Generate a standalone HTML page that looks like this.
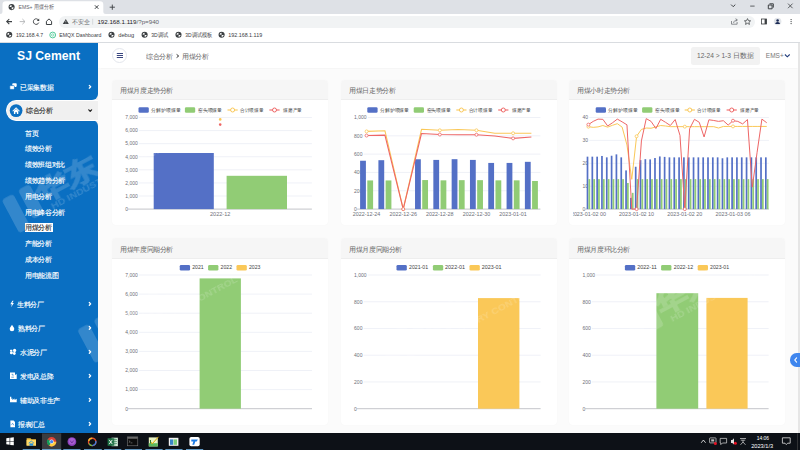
<!DOCTYPE html>
<html><head><meta charset="utf-8">
<style>
*{margin:0;padding:0;box-sizing:border-box}
html,body{width:800px;height:450px;overflow:hidden;background:#fbfbfb;font-family:"Liberation Sans",sans-serif;position:relative}
.a{position:absolute}
.t{position:absolute;white-space:nowrap;line-height:1}
#tabbar{left:0;top:0;width:800px;height:14px;background:#dee1e6}
#tab{left:2px;top:1px;width:102px;height:13px;background:#fff;border-radius:4px 4px 0 0}
#toolbar{left:0;top:14px;width:800px;height:14px;background:#fff}
#omni{left:58.5px;top:16px;width:696px;height:11.5px;background:#f1f3f4;border-radius:6px}
#bookmarks{left:0;top:28px;width:800px;height:14.5px;background:#fff;border-bottom:0.5px solid #d9dce0}
#sidebar{left:0;top:42.5px;width:98px;height:391px;background:#0a6fc2}
#header{left:98px;top:42.5px;width:699.7px;height:25.5px;background:#fff;box-shadow:0 0.5px 1px rgba(0,0,0,0.02)}
.card{position:absolute;background:#fff;border-radius:4px;box-shadow:0 0 1.5px rgba(0,0,0,0.035);overflow:hidden}
.card .hd{position:absolute;left:0;top:0;right:0;height:20.3px;background:#f6f6f6;border-bottom:0.5px solid #eeeeee}
.card .tt{position:absolute;left:8.3px;top:7.3px;font-size:20px;transform:scale(0.3315);transform-origin:0 0;color:#666;white-space:nowrap;line-height:1}
#taskbar{left:0;top:433.4px;width:800px;height:16.6px;background:#0d1117}
.sm{color:#fff;font-size:20px;transform:scale(0.3335);transform-origin:0 0;-webkit-text-stroke:0.45px currentColor}
.z{font-size:20px;transform-origin:0 0}
</style></head><body>

<!-- browser chrome -->
<div class="a" id="tabbar"></div>
<svg class="a" style="left:0;top:0" width="120" height="15" viewBox="0 0 120 15"><path d="M0,14 Q2.5,14 2.5,11.5 V4.5 Q2.5,1.2 5.8,1.2 H100 Q103.3,1.2 103.3,4.5 V11.5 Q103.3,14 105.8,14 V15 H0Z" fill="#fff"/></svg>
<div class="a" id="toolbar"></div>
<div class="a" id="omni"></div>
<div class="a" id="bookmarks"></div>
<svg class="a" style="left:0;top:0" width="800" height="43" viewBox="0 0 800 43">
<defs>
<g id="globe"><circle r="3.05" fill="#3c4043"/><path d="M-2.1,-0.2 C-1.9,-1.3 -1.1,-2 0,-2.1 L-0.1,-0.1Z" fill="#fff"/><path d="M2.1,0.3 C1.9,1.4 1.1,2 0.1,2.1 L0.1,0.2Z" fill="#fff"/></g>
</defs>
<!-- tab -->
<use href="#globe" x="11.6" y="7.1"/>
<text x="18.5" y="9.2" font-size="6.1" fill="#5f6368" font-family="Liberation Sans" textLength="35.5" lengthAdjust="spacingAndGlyphs">EMS+ 用煤分析</text>
<path d="M94.9,5.3 L98.4,8.8 M98.4,5.3 L94.9,8.8" stroke="#3c4043" stroke-width="1"/>
<path d="M112.3,4.6 V9.8 M109.7,7.2 H114.9" stroke="#3c4043" stroke-width="0.9"/>
<!-- window controls -->
<path d="M731.1,4.6 L733.2,6.7 L735.3,4.6" stroke="#3c4043" stroke-width="1" fill="none"/>
<path d="M750.2,6.1 H754.6" stroke="#3c4043" stroke-width="0.8"/>
<path d="M768.3,5 h3.8 v3.8 h-3.8z M769.5,3.8 h3.8 v3.8" stroke="#3c4043" stroke-width="1" fill="none"/>
<path d="M788,3.6 L792.6,8.2 M792.6,3.6 L788,8.2" stroke="#3c4043" stroke-width="0.8"/>
<!-- nav -->
<path d="M12,21.6 H6.8 M9.3,19 L6.7,21.6 L9.3,24.2" stroke="#3c4043" stroke-width="1.05" fill="none"/>
<path d="M19.7,21.6 H24.9 M22.4,19 L25,21.6 L22.4,24.2" stroke="#b1b3b6" stroke-width="0.9" fill="none"/>
<path d="M38.6,20.2 A2.8,2.8 0 1 0 38.8,22.6" stroke="#3c4043" stroke-width="0.9" fill="none"/><path d="M39.2,18.6 V21 H36.8Z" fill="#3c4043"/>
<path d="M46.4,21.3 L49,18.9 L51.6,21.3 V24.5 H46.4Z" stroke="#3c4043" stroke-width="1" fill="none" stroke-linejoin="round"/>
<!-- omnibox -->
<path d="M65.8,19 L68.8,24 H62.8Z" fill="#3c4043"/><path d="M65.8,20.7 V22.3 M65.8,22.9 V23.4" stroke="#fff" stroke-width="0.5"/>
<text x="72.4" y="24" font-size="5.9" fill="#5f6368" font-family="Liberation Sans">不安全</text>
<rect x="92.5" y="18.8" width="0.6" height="5.8" fill="#c4c7c9"/>
<text x="97.4" y="24.1" font-size="6.2" fill="#202124" font-family="Liberation Sans">192.168.1.119<tspan fill="#5f6368">/?p=940</tspan></text>
<path d="M731.5,21 v3.2 h5.6 v-2.2 M733.6,23 c0.3,-2 1.5,-3 3.5,-3 M735.6,18.6 l1.8,1.4 l-1.8,1.4" stroke="#5f6368" stroke-width="0.7" fill="none"/>
<path d="M747.5,18.6 l0.95,2.05 2.15,0.2 -1.65,1.45 0.5,2.1 -1.95,-1.1 -1.95,1.1 0.5,-2.1 -1.65,-1.45 2.15,-0.2z" stroke="#3c4043" stroke-width="0.75" fill="none" stroke-linejoin="round"/>
<rect x="761.6" y="19" width="5" height="5" stroke="#3c4043" stroke-width="0.8" fill="none"/><rect x="764.6" y="19" width="2" height="5" fill="#3c4043"/>
<circle cx="777.6" cy="21.6" r="3.8" fill="#e3e6ea"/><circle cx="777.6" cy="20.4" r="1.25" fill="#1b2a55"/><path d="M775.1,23.9 q0.4,-1.9 2.5,-1.9 q2.1,0 2.5,1.9z" fill="#1b2a55"/>
<circle cx="791.1" cy="19.6" r="0.65" fill="#3c4043"/><circle cx="791.1" cy="21.6" r="0.65" fill="#3c4043"/><circle cx="791.1" cy="23.6" r="0.65" fill="#3c4043"/>
<!-- bookmarks -->
<use href="#globe" x="9.2" y="34.8"/>
<text x="16" y="37.1" font-size="5.8" fill="#3c4043" font-family="Liberation Sans" textLength="27" lengthAdjust="spacingAndGlyphs">192.168.4.7</text>
<circle cx="52.7" cy="35" r="2.9" fill="none" stroke="#3ec48f" stroke-width="0.9"/><circle cx="52.7" cy="35" r="1.2" fill="none" stroke="#3ec48f" stroke-width="0.6"/>
<text x="59.3" y="37.1" font-size="5.8" fill="#3c4043" font-family="Liberation Sans" textLength="42.1" lengthAdjust="spacingAndGlyphs">EMQX Dashboard</text>
<use href="#globe" x="111.5" y="34.8"/>
<text x="118.2" y="37.1" font-size="5.8" fill="#3c4043" font-family="Liberation Sans" textLength="16" lengthAdjust="spacingAndGlyphs">debug</text>
<use href="#globe" x="144.6" y="34.8"/>
<text x="151.2" y="37.1" font-size="5.8" fill="#3c4043" font-family="Liberation Sans" textLength="17" lengthAdjust="spacingAndGlyphs">3D调试</text>
<use href="#globe" x="178.5" y="34.8"/>
<text x="185.2" y="37.1" font-size="5.8" fill="#3c4043" font-family="Liberation Sans" textLength="27" lengthAdjust="spacingAndGlyphs">3D调试模板</text>
<use href="#globe" x="221.6" y="34.8"/>
<text x="228.2" y="37.1" font-size="5.8" fill="#3c4043" font-family="Liberation Sans" textLength="34" lengthAdjust="spacingAndGlyphs">192.168.1.119</text>
</svg>


<!-- sidebar -->
<div class="a" id="sidebar"></div>
<svg class="a" style="left:0;top:43px" width="98" height="30" viewBox="0 43 98 30"><text x="17" y="60" font-family="Liberation Sans" font-size="12.6" font-weight="bold" fill="#fff" textLength="63" lengthAdjust="spacingAndGlyphs">SJ Cement</text></svg>

<!-- pill notch -->
<div class="a" style="left:88px;top:94px;width:10px;height:32px;background:#f0f0f0"></div>
<div class="a" style="left:80px;top:88px;width:18px;height:12px;background:#0a6fc2;border-bottom-right-radius:6px"></div>
<div class="a" style="left:80px;top:120.4px;width:18px;height:12px;background:#0a6fc2;border-top-right-radius:6px"></div>
<div class="a" style="left:5.5px;top:99.8px;width:92.5px;height:20.8px;background:#f0f0f0;border-radius:10.4px 0 0 10.4px;border:1.8px solid #fff;border-right:none"></div>
<svg class="a" style="left:0;top:43px" width="98" height="390" viewBox="0 43 98 390">
<g fill="#fff">
<!-- copy icon -->
<rect x="12.3" y="83.3" width="4.4" height="3.6" rx="0.8"/>
<rect x="9.8" y="85.6" width="4.6" height="3.8" rx="0.8" stroke="#0a6fc2" stroke-width="0.7"/>
</g>
<!-- home -->
<circle cx="16.1" cy="110.6" r="6.4" fill="#0a6fc2"/>
<path d="M12.3,111 L16.1,107.2 L19.9,111 L19.2,111.6 L16.1,108.6 L13,111.6Z M13.9,111 L16.1,108.9 L18.3,111 V114 H16.9 V112.3 H15.3 V114 H13.9Z" fill="#fff"/>
<path d="M88.8,109.8 L90.2,111.3 L91.6,109.8" stroke="#222" stroke-width="1.2" fill="none" stroke-linecap="round" stroke-linejoin="round"/>
<!-- arrows -->
<g stroke="#fff" stroke-width="1.25" fill="none" stroke-linecap="round" stroke-linejoin="round">
<path d="M89.3,85.4 L90.7,86.8 L89.3,88.2"/>
<path d="M89.3,302.5 L90.7,303.9 L89.3,305.3"/>
<path d="M89.3,326.5 L90.7,327.9 L89.3,329.3"/>
<path d="M89.3,350.5 L90.7,351.9 L89.3,353.3"/>
<path d="M89.3,374.5 L90.7,375.9 L89.3,377.3"/>
<path d="M89.3,398.5 L90.7,399.9 L89.3,401.3"/>
<path d="M89.3,422.5 L90.7,423.9 L89.3,425.3"/>
</g>
<g fill="#fff">
<!-- lightning -->
<path d="M12.4,300.7 L10.3,304.3 H11.9 L11.1,307.3 L13.9,303.1 H12.3 L13.6,300.7Z"/>
<!-- drop -->
<path d="M12,324.8 C11,326.4 9.7,327.6 9.7,329 A2.3,2.3 0 0 0 14.3,329 C14.3,327.6 13,326.4 12,324.8Z"/>
<!-- cement -->
<circle cx="14.6" cy="350.4" r="1.6"/><circle cx="11.4" cy="352.8" r="1.5"/><circle cx="14.3" cy="353.5" r="1.4"/><rect x="10" y="349.8" width="2.4" height="1.6" rx="0.4"/>
<!-- power station -->
<path d="M10,372.5 H15 V379 H10Z M15,375 L16.7,374 V379 H15Z"/>
<!-- factory -->
<path d="M10,396.8 V402.3 H16.7 V398.8 L14.6,400 V398.6 L12.4,400 V398.3 L11.3,399 V396.8Z"/>
<!-- report -->
<path d="M10.4,420.5 H13.6 L15,421.9 V427.2 H10.4Z"/>
</g>
<path d="M11.6,374.3 l1.4,0 0,1.6 M11.3,377.2 l2.6,0" stroke="#0a6fc2" stroke-width="0.6" fill="none"/>
<path d="M11.5,424.7 L12.6,423.3 L13.9,425.3" stroke="#0a6fc2" stroke-width="0.6" fill="none"/>
</svg>
<div class="t sm" style="left:20px;top:83.5px">已采集数据</div>
<div class="t sm" style="left:25.6px;top:106.5px;color:#333">综合分析</div>
<div class="a" style="left:24.9px;top:222.8px;width:28.6px;height:9.5px;background:#fff"></div>
<div class="t sm" style="left:25px;top:129.5px">首页</div>
<div class="t sm" style="left:25px;top:145.2px">绩效分析</div>
<div class="t sm" style="left:25px;top:161.2px">绩效班组对比</div>
<div class="t sm" style="left:25px;top:176.9px">绩效趋势分析</div>
<div class="t sm" style="left:25px;top:192.8px">用电分析</div>
<div class="t sm" style="left:25px;top:208.5px">用电峰谷分析</div>
<div class="t sm" style="left:25px;top:224.4px;color:#333">用煤分析</div>
<div class="t sm" style="left:25px;top:240.2px">产能分析</div>
<div class="t sm" style="left:25px;top:256.2px">成本分析</div>
<div class="t sm" style="left:25px;top:271.9px">用电能流图</div>
<div class="t sm" style="left:17.4px;top:300.6px">生料分厂</div>
<div class="t sm" style="left:17.8px;top:324.6px">熟料分厂</div>
<div class="t sm" style="left:20px;top:348.6px">水泥分厂</div>
<div class="t sm" style="left:20px;top:372.6px">发电及总降</div>
<div class="t sm" style="left:20px;top:396.6px">辅助及非生产</div>
<div class="t sm" style="left:18.4px;top:420.6px">报表汇总</div>


<!-- main header -->
<div class="a" id="header"></div>
<div class="a" style="left:112.2px;top:47.9px;width:15.3px;height:15.3px;border-radius:50%;background:#fff;border:0.6px solid #e3e6ec"></div>
<svg class="a" style="left:0;top:0" width="800" height="70" viewBox="0 0 800 70">
<path d="M116.8,53.5 H123 M116.8,55.5 H123 M116.8,57.5 H123" stroke="#2e3c78" stroke-width="0.95"/>
<path d="M176.6,54.4 L178.7,56 L176.6,57.6" stroke="#333" stroke-width="1" fill="none"/>
<path d="M784.9,54.5 L787.3,56.8 L789.7,54.5" stroke="#1f3a7a" stroke-width="1.1" fill="none"/>
</svg>
<div class="t z" style="left:146px;top:52.6px;color:#666;transform:scale(0.3335)">综合分析</div>
<div class="t z" style="left:182px;top:52.6px;color:#666;transform:scale(0.3335)">用煤分析</div>
<div class="a" style="left:691.2px;top:47.3px;width:68.7px;height:17.4px;background:#f2f2f2;border-radius:2.5px"></div>
<div class="t" style="left:697px;top:53px;font-size:6.6px;color:#666">12-24 &gt; 1-3 日数据</div>
<div class="t" style="left:765.8px;top:52.6px;font-size:6.5px;color:#777">EMS+</div>
<div class="a" style="left:797.7px;top:42.5px;width:2.3px;height:390.9px;background:#e6e6e6"></div>


<!-- cards -->
<div class="card" style="left:112px;top:80px;width:216px;height:145.3px"><div class="hd"></div><div class="tt">用煤月度走势分析</div></div>
<div class="card" style="left:340.8px;top:80px;width:216px;height:145.3px"><div class="hd"></div><div class="tt">用煤日走势分析</div></div>
<div class="card" style="left:569.2px;top:80px;width:216.3px;height:145.3px"><div class="hd"></div><div class="tt">用煤小时走势分析</div></div>
<div class="card" style="left:112px;top:238.4px;width:216px;height:187px"><div class="hd" style="height:20.2px"></div><div class="tt" style="top:7.2px">用煤年度同期分析</div></div>
<div class="card" style="left:340.8px;top:238.4px;width:216px;height:187px"><div class="hd" style="height:20.2px"></div><div class="tt" style="top:7.2px">用煤月度同期分析</div></div>
<div class="card" style="left:569.2px;top:238.4px;width:216.3px;height:187px"><div class="hd" style="height:20.2px"></div><div class="tt" style="top:7.2px">用煤月度环比分析</div></div>

<!--CHARTS--><svg class="a" style="left:0;top:0" width="800" height="450" viewBox="0 0 800 450" font-family="Liberation Sans">
<defs><clipPath id="c3"><rect x="572.9" y="100" width="214" height="125"/></clipPath></defs>
<text x="125.30" y="119.30" font-size="5" fill="#6e7079" text-anchor="start">7,000</text>
<line x1="139.01" y1="117.50" x2="311.90" y2="117.50" stroke="#e4e8f1" stroke-width="0.6"/>
<text x="125.30" y="132.39" font-size="5" fill="#6e7079" text-anchor="start">6,000</text>
<line x1="139.01" y1="130.59" x2="311.90" y2="130.59" stroke="#e4e8f1" stroke-width="0.6"/>
<text x="125.30" y="145.47" font-size="5" fill="#6e7079" text-anchor="start">5,000</text>
<line x1="139.01" y1="143.67" x2="311.90" y2="143.67" stroke="#e4e8f1" stroke-width="0.6"/>
<text x="125.30" y="158.56" font-size="5" fill="#6e7079" text-anchor="start">4,000</text>
<line x1="139.01" y1="156.76" x2="311.90" y2="156.76" stroke="#e4e8f1" stroke-width="0.6"/>
<text x="125.30" y="171.64" font-size="5" fill="#6e7079" text-anchor="start">3,000</text>
<line x1="139.01" y1="169.84" x2="311.90" y2="169.84" stroke="#e4e8f1" stroke-width="0.6"/>
<text x="125.30" y="184.73" font-size="5" fill="#6e7079" text-anchor="start">2,000</text>
<line x1="139.01" y1="182.93" x2="311.90" y2="182.93" stroke="#e4e8f1" stroke-width="0.6"/>
<text x="125.30" y="197.81" font-size="5" fill="#6e7079" text-anchor="start">1,000</text>
<line x1="139.01" y1="196.01" x2="311.90" y2="196.01" stroke="#e4e8f1" stroke-width="0.6"/>
<text x="125.30" y="210.90" font-size="5" fill="#6e7079" text-anchor="start">0</text>
<line x1="127.88" y1="209.10" x2="311.90" y2="209.10" stroke="#b4b6bb" stroke-width="0.8"/>
<rect x="138.50" y="107.25" width="10.30" height="5.50" fill="#5470c6" rx="1.3"/>
<text x="151.00" y="111.80" font-size="5" fill="#444" text-anchor="start" textLength="29.5" lengthAdjust="spacingAndGlyphs">分解炉喂煤量</text>
<rect x="184.90" y="107.25" width="10.30" height="5.50" fill="#91cc75" rx="1.3"/>
<text x="197.80" y="111.80" font-size="5" fill="#444" text-anchor="start" textLength="24.4" lengthAdjust="spacingAndGlyphs">窑头喂煤量</text>
<line x1="227.50" y1="110.00" x2="237.70" y2="110.00" stroke="#fac858" stroke-width="1.1"/>
<circle cx="232.60" cy="110.00" r="2.0" fill="#fff" stroke="#fac858" stroke-width="1.0"/>
<text x="240.00" y="111.80" font-size="5" fill="#444" text-anchor="start" textLength="23.5" lengthAdjust="spacingAndGlyphs">合计喂煤量</text>
<line x1="269.40" y1="110.00" x2="279.60" y2="110.00" stroke="#ee6666" stroke-width="1.1"/>
<circle cx="274.50" cy="110.00" r="2.0" fill="#fff" stroke="#ee6666" stroke-width="1.0"/>
<text x="283.00" y="111.80" font-size="5" fill="#444" text-anchor="start" textLength="19" lengthAdjust="spacingAndGlyphs">煤磨产量</text>
<rect x="153.70" y="153.00" width="60.10" height="56.10" fill="#5470c6" rx="0"/>
<rect x="226.60" y="175.80" width="60.40" height="33.30" fill="#91cc75" rx="0"/>
<circle cx="220.2" cy="119.4" r="1.3" fill="#fac858"/>
<circle cx="220.2" cy="124.6" r="1.3" fill="#ee6666"/>
<text x="220.20" y="216.30" font-size="5" fill="#6e7079" text-anchor="middle" textLength="20.3" lengthAdjust="spacingAndGlyphs">2022-12</text>
<text x="354.10" y="119.30" font-size="5" fill="#6e7079" text-anchor="start">1,000</text>
<line x1="367.81" y1="117.50" x2="540.40" y2="117.50" stroke="#e4e8f1" stroke-width="0.6"/>
<text x="354.10" y="137.62" font-size="5" fill="#6e7079" text-anchor="start">800</text>
<line x1="363.64" y1="135.82" x2="540.40" y2="135.82" stroke="#e4e8f1" stroke-width="0.6"/>
<text x="354.10" y="155.94" font-size="5" fill="#6e7079" text-anchor="start">600</text>
<line x1="363.64" y1="154.14" x2="540.40" y2="154.14" stroke="#e4e8f1" stroke-width="0.6"/>
<text x="354.10" y="174.26" font-size="5" fill="#6e7079" text-anchor="start">400</text>
<line x1="363.64" y1="172.46" x2="540.40" y2="172.46" stroke="#e4e8f1" stroke-width="0.6"/>
<text x="354.10" y="192.58" font-size="5" fill="#6e7079" text-anchor="start">200</text>
<line x1="363.64" y1="190.78" x2="540.40" y2="190.78" stroke="#e4e8f1" stroke-width="0.6"/>
<text x="354.10" y="210.90" font-size="5" fill="#6e7079" text-anchor="start">0</text>
<line x1="356.68" y1="209.10" x2="540.40" y2="209.10" stroke="#b4b6bb" stroke-width="0.8"/>
<rect x="367.30" y="107.25" width="10.30" height="5.50" fill="#5470c6" rx="1.3"/>
<text x="379.80" y="111.80" font-size="5" fill="#444" text-anchor="start" textLength="29.5" lengthAdjust="spacingAndGlyphs">分解炉喂煤量</text>
<rect x="413.70" y="107.25" width="10.30" height="5.50" fill="#91cc75" rx="1.3"/>
<text x="426.60" y="111.80" font-size="5" fill="#444" text-anchor="start" textLength="24.4" lengthAdjust="spacingAndGlyphs">窑头喂煤量</text>
<line x1="456.30" y1="110.00" x2="466.50" y2="110.00" stroke="#fac858" stroke-width="1.1"/>
<circle cx="461.40" cy="110.00" r="2.0" fill="#fff" stroke="#fac858" stroke-width="1.0"/>
<text x="468.80" y="111.80" font-size="5" fill="#444" text-anchor="start" textLength="23.5" lengthAdjust="spacingAndGlyphs">合计喂煤量</text>
<line x1="498.20" y1="110.00" x2="508.40" y2="110.00" stroke="#ee6666" stroke-width="1.1"/>
<circle cx="503.30" cy="110.00" r="2.0" fill="#fff" stroke="#ee6666" stroke-width="1.0"/>
<text x="511.80" y="111.80" font-size="5" fill="#444" text-anchor="start" textLength="19" lengthAdjust="spacingAndGlyphs">煤磨产量</text>
<rect x="360.10" y="160.74" width="5.80" height="48.36" fill="#5470c6" rx="0"/>
<rect x="367.30" y="180.43" width="5.80" height="28.67" fill="#91cc75" rx="0"/>
<rect x="378.41" y="160.19" width="5.80" height="48.91" fill="#5470c6" rx="0"/>
<rect x="385.61" y="180.43" width="5.80" height="28.67" fill="#91cc75" rx="0"/>
<rect x="415.03" y="159.27" width="5.80" height="49.83" fill="#5470c6" rx="0"/>
<rect x="422.23" y="180.06" width="5.80" height="29.04" fill="#91cc75" rx="0"/>
<rect x="433.34" y="159.91" width="5.80" height="49.19" fill="#5470c6" rx="0"/>
<rect x="440.54" y="180.34" width="5.80" height="28.76" fill="#91cc75" rx="0"/>
<rect x="451.65" y="159.18" width="5.80" height="49.92" fill="#5470c6" rx="0"/>
<rect x="458.85" y="180.15" width="5.80" height="28.95" fill="#91cc75" rx="0"/>
<rect x="469.96" y="159.91" width="5.80" height="49.19" fill="#5470c6" rx="0"/>
<rect x="477.16" y="180.15" width="5.80" height="28.95" fill="#91cc75" rx="0"/>
<rect x="488.27" y="162.93" width="5.80" height="46.17" fill="#5470c6" rx="0"/>
<rect x="495.47" y="180.34" width="5.80" height="28.76" fill="#91cc75" rx="0"/>
<rect x="506.58" y="162.93" width="5.80" height="46.17" fill="#5470c6" rx="0"/>
<rect x="513.78" y="180.34" width="5.80" height="28.76" fill="#91cc75" rx="0"/>
<rect x="524.89" y="161.83" width="5.80" height="47.27" fill="#5470c6" rx="0"/>
<rect x="532.09" y="180.98" width="5.80" height="28.12" fill="#91cc75" rx="0"/>
<polyline points="366.60,131.42 384.91,130.69 403.22,209.10 421.53,129.32 439.84,130.32 458.15,129.50 476.46,130.32 494.77,133.26 513.08,133.26 531.39,133.26" fill="none" stroke="#fac858" stroke-width="1.1" stroke-linejoin="round"/>
<polyline points="366.60,135.55 384.91,135.09 403.22,209.10 421.53,133.44 439.84,134.54 458.15,134.72 476.46,134.72 494.77,136.00 513.08,138.38 531.39,137.01" fill="none" stroke="#ee6666" stroke-width="1.1" stroke-linejoin="round"/>
<circle cx="366.60" cy="131.42" r="1.5" fill="#fff" stroke="#fac858" stroke-width="0.8"/>
<circle cx="366.60" cy="135.55" r="1.5" fill="#fff" stroke="#ee6666" stroke-width="0.8"/>
<circle cx="403.22" cy="209.10" r="1.5" fill="#fff" stroke="#fac858" stroke-width="0.8"/>
<circle cx="403.22" cy="209.10" r="1.5" fill="#fff" stroke="#ee6666" stroke-width="0.8"/>
<circle cx="439.84" cy="130.32" r="1.5" fill="#fff" stroke="#fac858" stroke-width="0.8"/>
<circle cx="439.84" cy="134.54" r="1.5" fill="#fff" stroke="#ee6666" stroke-width="0.8"/>
<circle cx="476.46" cy="130.32" r="1.5" fill="#fff" stroke="#fac858" stroke-width="0.8"/>
<circle cx="476.46" cy="134.72" r="1.5" fill="#fff" stroke="#ee6666" stroke-width="0.8"/>
<circle cx="513.08" cy="133.26" r="1.5" fill="#fff" stroke="#fac858" stroke-width="0.8"/>
<circle cx="513.08" cy="138.38" r="1.5" fill="#fff" stroke="#ee6666" stroke-width="0.8"/>
<text x="366.60" y="216.30" font-size="5" fill="#6e7079" text-anchor="middle" textLength="27.5" lengthAdjust="spacingAndGlyphs">2022-12-24</text>
<text x="403.22" y="216.30" font-size="5" fill="#6e7079" text-anchor="middle" textLength="27.5" lengthAdjust="spacingAndGlyphs">2022-12-26</text>
<text x="439.84" y="216.30" font-size="5" fill="#6e7079" text-anchor="middle" textLength="27.5" lengthAdjust="spacingAndGlyphs">2022-12-28</text>
<text x="476.46" y="216.30" font-size="5" fill="#6e7079" text-anchor="middle" textLength="27.5" lengthAdjust="spacingAndGlyphs">2022-12-30</text>
<text x="513.08" y="216.30" font-size="5" fill="#6e7079" text-anchor="middle" textLength="27.5" lengthAdjust="spacingAndGlyphs">2023-01-01</text>
<text x="582.50" y="119.30" font-size="5" fill="#6e7079" text-anchor="start">40</text>
<line x1="589.26" y1="117.50" x2="768.90" y2="117.50" stroke="#e4e8f1" stroke-width="0.6"/>
<text x="582.50" y="142.20" font-size="5" fill="#6e7079" text-anchor="start">30</text>
<line x1="589.26" y1="140.40" x2="768.90" y2="140.40" stroke="#e4e8f1" stroke-width="0.6"/>
<text x="582.50" y="165.10" font-size="5" fill="#6e7079" text-anchor="start">20</text>
<line x1="589.26" y1="163.30" x2="768.90" y2="163.30" stroke="#e4e8f1" stroke-width="0.6"/>
<text x="582.50" y="188.00" font-size="5" fill="#6e7079" text-anchor="start">10</text>
<line x1="589.26" y1="186.20" x2="768.90" y2="186.20" stroke="#e4e8f1" stroke-width="0.6"/>
<text x="582.50" y="210.90" font-size="5" fill="#6e7079" text-anchor="start">0</text>
<line x1="585.08" y1="209.10" x2="768.90" y2="209.10" stroke="#b4b6bb" stroke-width="0.8"/>
<rect x="595.70" y="107.25" width="10.30" height="5.50" fill="#5470c6" rx="1.3"/>
<text x="608.20" y="111.80" font-size="5" fill="#444" text-anchor="start" textLength="29.5" lengthAdjust="spacingAndGlyphs">分解炉喂煤量</text>
<rect x="642.10" y="107.25" width="10.30" height="5.50" fill="#91cc75" rx="1.3"/>
<text x="655.00" y="111.80" font-size="5" fill="#444" text-anchor="start" textLength="24.4" lengthAdjust="spacingAndGlyphs">窑头喂煤量</text>
<line x1="684.70" y1="110.00" x2="694.90" y2="110.00" stroke="#fac858" stroke-width="1.1"/>
<circle cx="689.80" cy="110.00" r="2.0" fill="#fff" stroke="#fac858" stroke-width="1.0"/>
<text x="697.20" y="111.80" font-size="5" fill="#444" text-anchor="start" textLength="23.5" lengthAdjust="spacingAndGlyphs">合计喂煤量</text>
<line x1="726.60" y1="110.00" x2="736.80" y2="110.00" stroke="#ee6666" stroke-width="1.1"/>
<circle cx="731.70" cy="110.00" r="2.0" fill="#fff" stroke="#ee6666" stroke-width="1.0"/>
<text x="740.20" y="111.80" font-size="5" fill="#444" text-anchor="start" textLength="19" lengthAdjust="spacingAndGlyphs">煤磨产量</text>
<rect x="586.65" y="156.66" width="1.70" height="52.44" fill="#5470c6" rx="0"/>
<rect x="588.45" y="179.10" width="1.75" height="30.00" fill="#91cc75" rx="0"/>
<rect x="591.47" y="156.66" width="1.70" height="52.44" fill="#5470c6" rx="0"/>
<rect x="593.27" y="179.10" width="1.75" height="30.00" fill="#91cc75" rx="0"/>
<rect x="596.29" y="156.66" width="1.70" height="52.44" fill="#5470c6" rx="0"/>
<rect x="598.09" y="179.10" width="1.75" height="30.00" fill="#91cc75" rx="0"/>
<rect x="601.11" y="155.97" width="1.70" height="53.13" fill="#5470c6" rx="0"/>
<rect x="602.91" y="179.10" width="1.75" height="30.00" fill="#91cc75" rx="0"/>
<rect x="605.93" y="157.35" width="1.70" height="51.75" fill="#5470c6" rx="0"/>
<rect x="607.73" y="179.10" width="1.75" height="30.00" fill="#91cc75" rx="0"/>
<rect x="610.75" y="155.74" width="1.70" height="53.36" fill="#5470c6" rx="0"/>
<rect x="612.55" y="179.10" width="1.75" height="30.00" fill="#91cc75" rx="0"/>
<rect x="615.57" y="154.37" width="1.70" height="54.73" fill="#5470c6" rx="0"/>
<rect x="617.37" y="179.10" width="1.75" height="30.00" fill="#91cc75" rx="0"/>
<rect x="620.39" y="157.35" width="1.70" height="51.75" fill="#5470c6" rx="0"/>
<rect x="622.19" y="179.10" width="1.75" height="30.00" fill="#91cc75" rx="0"/>
<rect x="625.21" y="170.40" width="1.70" height="38.70" fill="#5470c6" rx="0"/>
<rect x="627.01" y="182.99" width="1.75" height="26.11" fill="#91cc75" rx="0"/>
<rect x="630.03" y="197.88" width="1.70" height="11.22" fill="#5470c6" rx="0"/>
<rect x="631.83" y="192.84" width="1.75" height="16.26" fill="#91cc75" rx="0"/>
<rect x="634.85" y="166.74" width="1.70" height="42.36" fill="#5470c6" rx="0"/>
<rect x="636.65" y="179.10" width="1.75" height="30.00" fill="#91cc75" rx="0"/>
<rect x="639.67" y="160.09" width="1.70" height="49.01" fill="#5470c6" rx="0"/>
<rect x="641.47" y="179.10" width="1.75" height="30.00" fill="#91cc75" rx="0"/>
<rect x="644.49" y="159.18" width="1.70" height="49.92" fill="#5470c6" rx="0"/>
<rect x="646.29" y="179.10" width="1.75" height="30.00" fill="#91cc75" rx="0"/>
<rect x="649.31" y="159.41" width="1.70" height="49.69" fill="#5470c6" rx="0"/>
<rect x="651.11" y="179.10" width="1.75" height="30.00" fill="#91cc75" rx="0"/>
<rect x="654.13" y="158.03" width="1.70" height="51.07" fill="#5470c6" rx="0"/>
<rect x="655.93" y="179.10" width="1.75" height="30.00" fill="#91cc75" rx="0"/>
<rect x="658.95" y="156.43" width="1.70" height="52.67" fill="#5470c6" rx="0"/>
<rect x="660.75" y="179.10" width="1.75" height="30.00" fill="#91cc75" rx="0"/>
<rect x="663.77" y="156.89" width="1.70" height="52.21" fill="#5470c6" rx="0"/>
<rect x="665.57" y="179.10" width="1.75" height="30.00" fill="#91cc75" rx="0"/>
<rect x="668.59" y="157.35" width="1.70" height="51.75" fill="#5470c6" rx="0"/>
<rect x="670.39" y="179.10" width="1.75" height="30.00" fill="#91cc75" rx="0"/>
<rect x="673.41" y="157.35" width="1.70" height="51.75" fill="#5470c6" rx="0"/>
<rect x="675.21" y="179.10" width="1.75" height="30.00" fill="#91cc75" rx="0"/>
<rect x="678.23" y="157.35" width="1.70" height="51.75" fill="#5470c6" rx="0"/>
<rect x="680.03" y="179.10" width="1.75" height="30.00" fill="#91cc75" rx="0"/>
<rect x="683.05" y="157.35" width="1.70" height="51.75" fill="#5470c6" rx="0"/>
<rect x="684.85" y="179.10" width="1.75" height="30.00" fill="#91cc75" rx="0"/>
<rect x="687.87" y="157.35" width="1.70" height="51.75" fill="#5470c6" rx="0"/>
<rect x="689.67" y="179.10" width="1.75" height="30.00" fill="#91cc75" rx="0"/>
<rect x="692.69" y="157.35" width="1.70" height="51.75" fill="#5470c6" rx="0"/>
<rect x="694.49" y="179.10" width="1.75" height="30.00" fill="#91cc75" rx="0"/>
<rect x="697.51" y="157.35" width="1.70" height="51.75" fill="#5470c6" rx="0"/>
<rect x="699.31" y="179.10" width="1.75" height="30.00" fill="#91cc75" rx="0"/>
<rect x="702.33" y="157.35" width="1.70" height="51.75" fill="#5470c6" rx="0"/>
<rect x="704.13" y="179.10" width="1.75" height="30.00" fill="#91cc75" rx="0"/>
<rect x="707.15" y="157.35" width="1.70" height="51.75" fill="#5470c6" rx="0"/>
<rect x="708.95" y="179.10" width="1.75" height="30.00" fill="#91cc75" rx="0"/>
<rect x="711.97" y="157.35" width="1.70" height="51.75" fill="#5470c6" rx="0"/>
<rect x="713.77" y="179.10" width="1.75" height="30.00" fill="#91cc75" rx="0"/>
<rect x="716.79" y="157.35" width="1.70" height="51.75" fill="#5470c6" rx="0"/>
<rect x="718.59" y="179.10" width="1.75" height="30.00" fill="#91cc75" rx="0"/>
<rect x="721.61" y="158.26" width="1.70" height="50.84" fill="#5470c6" rx="0"/>
<rect x="723.41" y="179.10" width="1.75" height="30.00" fill="#91cc75" rx="0"/>
<rect x="726.43" y="157.35" width="1.70" height="51.75" fill="#5470c6" rx="0"/>
<rect x="728.23" y="179.10" width="1.75" height="30.00" fill="#91cc75" rx="0"/>
<rect x="731.25" y="157.35" width="1.70" height="51.75" fill="#5470c6" rx="0"/>
<rect x="733.05" y="179.10" width="1.75" height="30.00" fill="#91cc75" rx="0"/>
<rect x="736.07" y="157.35" width="1.70" height="51.75" fill="#5470c6" rx="0"/>
<rect x="737.87" y="179.10" width="1.75" height="30.00" fill="#91cc75" rx="0"/>
<rect x="740.89" y="157.35" width="1.70" height="51.75" fill="#5470c6" rx="0"/>
<rect x="742.69" y="179.10" width="1.75" height="30.00" fill="#91cc75" rx="0"/>
<rect x="745.71" y="157.35" width="1.70" height="51.75" fill="#5470c6" rx="0"/>
<rect x="747.51" y="179.10" width="1.75" height="30.00" fill="#91cc75" rx="0"/>
<rect x="750.53" y="157.35" width="1.70" height="51.75" fill="#5470c6" rx="0"/>
<rect x="752.33" y="179.10" width="1.75" height="30.00" fill="#91cc75" rx="0"/>
<rect x="755.35" y="157.35" width="1.70" height="51.75" fill="#5470c6" rx="0"/>
<rect x="757.15" y="179.10" width="1.75" height="30.00" fill="#91cc75" rx="0"/>
<rect x="760.17" y="157.35" width="1.70" height="51.75" fill="#5470c6" rx="0"/>
<rect x="761.97" y="179.10" width="1.75" height="30.00" fill="#91cc75" rx="0"/>
<rect x="764.99" y="157.35" width="1.70" height="51.75" fill="#5470c6" rx="0"/>
<rect x="766.79" y="179.10" width="1.75" height="30.00" fill="#91cc75" rx="0"/>
<polyline points="588.40,126.66 593.22,127.35 598.04,126.89 602.86,125.52 607.68,127.12 612.50,125.29 617.32,123.68 622.14,127.12 626.96,144.98 631.78,179.33 636.60,136.28 641.42,129.41 646.24,128.03 651.06,128.26 655.88,126.89 660.70,125.52 665.52,125.97 670.34,126.66 675.16,126.66 679.98,126.66 684.80,126.66 689.62,126.66 694.44,126.66 699.26,126.66 704.08,126.66 708.90,126.66 713.72,126.66 718.54,128.03 723.36,126.43 728.18,126.43 733.00,126.43 737.82,126.43 742.64,126.43 747.46,126.43 752.28,126.43 757.10,126.43 761.92,126.43 766.74,126.43" fill="none" stroke="#fac858" stroke-width="1.0" stroke-linejoin="round"/>
<polyline points="588.40,124.60 593.22,121.39 598.04,119.10 602.86,119.33 607.68,125.97 612.50,122.77 617.32,119.10 622.14,121.85 626.96,124.83 631.78,209.10 636.60,209.10 641.42,140.86 646.24,118.64 651.06,121.39 655.88,128.49 660.70,119.33 665.52,122.31 670.34,125.52 675.16,119.56 679.98,135.36 684.80,209.10 689.62,128.72 694.44,119.33 699.26,122.31 704.08,136.97 708.90,119.79 713.72,120.48 718.54,121.39 723.36,120.71 728.18,125.06 733.00,120.71 737.82,121.39 742.64,123.91 747.46,119.56 752.28,187.12 757.10,152.31 761.92,119.10 766.74,122.77" fill="none" stroke="#ee6666" stroke-width="1.0" stroke-linejoin="round"/>
<circle cx="588.40" cy="126.66" r="1.5" fill="#fff" stroke="#fac858" stroke-width="0.8"/>
<circle cx="588.40" cy="124.60" r="1.5" fill="#fff" stroke="#ee6666" stroke-width="0.8"/>
<circle cx="636.60" cy="136.28" r="1.5" fill="#fff" stroke="#fac858" stroke-width="0.8"/>
<circle cx="636.60" cy="209.10" r="1.5" fill="#fff" stroke="#ee6666" stroke-width="0.8"/>
<circle cx="684.80" cy="126.66" r="1.5" fill="#fff" stroke="#fac858" stroke-width="0.8"/>
<circle cx="684.80" cy="209.10" r="1.5" fill="#fff" stroke="#ee6666" stroke-width="0.8"/>
<circle cx="733.00" cy="126.43" r="1.5" fill="#fff" stroke="#fac858" stroke-width="0.8"/>
<circle cx="733.00" cy="120.71" r="1.5" fill="#fff" stroke="#ee6666" stroke-width="0.8"/>
<text x="588.40" y="216.30" font-size="5" fill="#6e7079" text-anchor="middle" textLength="35" lengthAdjust="spacingAndGlyphs" clip-path="url(#c3)">2023-01-02 00</text>
<text x="636.60" y="216.30" font-size="5" fill="#6e7079" text-anchor="middle" textLength="35" lengthAdjust="spacingAndGlyphs" clip-path="url(#c3)">2023-01-02 10</text>
<text x="684.80" y="216.30" font-size="5" fill="#6e7079" text-anchor="middle" textLength="35" lengthAdjust="spacingAndGlyphs" clip-path="url(#c3)">2023-01-02 20</text>
<text x="733.00" y="216.30" font-size="5" fill="#6e7079" text-anchor="middle" textLength="35" lengthAdjust="spacingAndGlyphs" clip-path="url(#c3)">2023-01-03 06</text>
<text x="125.30" y="276.80" font-size="5" fill="#6e7079" text-anchor="start">7,000</text>
<line x1="139.01" y1="275.00" x2="312.00" y2="275.00" stroke="#e4e8f1" stroke-width="0.6"/>
<text x="125.30" y="295.90" font-size="5" fill="#6e7079" text-anchor="start">6,000</text>
<line x1="139.01" y1="294.10" x2="312.00" y2="294.10" stroke="#e4e8f1" stroke-width="0.6"/>
<text x="125.30" y="315.00" font-size="5" fill="#6e7079" text-anchor="start">5,000</text>
<line x1="139.01" y1="313.20" x2="312.00" y2="313.20" stroke="#e4e8f1" stroke-width="0.6"/>
<text x="125.30" y="334.10" font-size="5" fill="#6e7079" text-anchor="start">4,000</text>
<line x1="139.01" y1="332.30" x2="312.00" y2="332.30" stroke="#e4e8f1" stroke-width="0.6"/>
<text x="125.30" y="353.20" font-size="5" fill="#6e7079" text-anchor="start">3,000</text>
<line x1="139.01" y1="351.40" x2="312.00" y2="351.40" stroke="#e4e8f1" stroke-width="0.6"/>
<text x="125.30" y="372.30" font-size="5" fill="#6e7079" text-anchor="start">2,000</text>
<line x1="139.01" y1="370.50" x2="312.00" y2="370.50" stroke="#e4e8f1" stroke-width="0.6"/>
<text x="125.30" y="391.40" font-size="5" fill="#6e7079" text-anchor="start">1,000</text>
<line x1="139.01" y1="389.60" x2="312.00" y2="389.60" stroke="#e4e8f1" stroke-width="0.6"/>
<text x="125.30" y="410.50" font-size="5" fill="#6e7079" text-anchor="start">0</text>
<line x1="127.88" y1="408.70" x2="312.00" y2="408.70" stroke="#b4b6bb" stroke-width="0.8"/>
<rect x="179.75" y="265.05" width="10.30" height="5.50" fill="#5470c6" rx="1.3"/>
<text x="192.25" y="269.00" font-size="5" fill="#444" text-anchor="start" textLength="11.5" lengthAdjust="spacingAndGlyphs">2021</text>
<rect x="208.10" y="265.05" width="10.30" height="5.50" fill="#91cc75" rx="1.3"/>
<text x="220.60" y="269.00" font-size="5" fill="#444" text-anchor="start" textLength="11.5" lengthAdjust="spacingAndGlyphs">2022</text>
<rect x="236.50" y="265.05" width="10.30" height="5.50" fill="#fac858" rx="1.3"/>
<text x="249.00" y="269.00" font-size="5" fill="#444" text-anchor="start" textLength="11.5" lengthAdjust="spacingAndGlyphs">2023</text>
<rect x="199.60" y="278.40" width="41.30" height="130.30" fill="#91cc75" rx="0"/>
<text x="354.10" y="276.80" font-size="5" fill="#6e7079" text-anchor="start">1,000</text>
<line x1="367.81" y1="275.00" x2="540.60" y2="275.00" stroke="#e4e8f1" stroke-width="0.6"/>
<text x="354.10" y="303.54" font-size="5" fill="#6e7079" text-anchor="start">800</text>
<line x1="363.64" y1="301.74" x2="540.60" y2="301.74" stroke="#e4e8f1" stroke-width="0.6"/>
<text x="354.10" y="330.28" font-size="5" fill="#6e7079" text-anchor="start">600</text>
<line x1="363.64" y1="328.48" x2="540.60" y2="328.48" stroke="#e4e8f1" stroke-width="0.6"/>
<text x="354.10" y="357.02" font-size="5" fill="#6e7079" text-anchor="start">400</text>
<line x1="363.64" y1="355.22" x2="540.60" y2="355.22" stroke="#e4e8f1" stroke-width="0.6"/>
<text x="354.10" y="383.76" font-size="5" fill="#6e7079" text-anchor="start">200</text>
<line x1="363.64" y1="381.96" x2="540.60" y2="381.96" stroke="#e4e8f1" stroke-width="0.6"/>
<text x="354.10" y="410.50" font-size="5" fill="#6e7079" text-anchor="start">0</text>
<line x1="356.68" y1="408.70" x2="540.60" y2="408.70" stroke="#b4b6bb" stroke-width="0.8"/>
<rect x="396.50" y="265.05" width="10.30" height="5.50" fill="#5470c6" rx="1.3"/>
<text x="409.00" y="269.00" font-size="5" fill="#444" text-anchor="start" textLength="19.1" lengthAdjust="spacingAndGlyphs">2021-01</text>
<rect x="432.90" y="265.05" width="10.30" height="5.50" fill="#91cc75" rx="1.3"/>
<text x="445.10" y="269.00" font-size="5" fill="#444" text-anchor="start" textLength="19.9" lengthAdjust="spacingAndGlyphs">2022-01</text>
<rect x="469.50" y="265.05" width="10.30" height="5.50" fill="#fac858" rx="1.3"/>
<text x="481.70" y="269.00" font-size="5" fill="#444" text-anchor="start" textLength="19.8" lengthAdjust="spacingAndGlyphs">2023-01</text>
<rect x="478.00" y="298.10" width="41.40" height="110.60" fill="#fac858" rx="0"/>
<text x="582.50" y="276.80" font-size="5" fill="#6e7079" text-anchor="start">1,000</text>
<line x1="596.21" y1="275.00" x2="768.60" y2="275.00" stroke="#e4e8f1" stroke-width="0.6"/>
<text x="582.50" y="303.54" font-size="5" fill="#6e7079" text-anchor="start">800</text>
<line x1="592.04" y1="301.74" x2="768.60" y2="301.74" stroke="#e4e8f1" stroke-width="0.6"/>
<text x="582.50" y="330.28" font-size="5" fill="#6e7079" text-anchor="start">600</text>
<line x1="592.04" y1="328.48" x2="768.60" y2="328.48" stroke="#e4e8f1" stroke-width="0.6"/>
<text x="582.50" y="357.02" font-size="5" fill="#6e7079" text-anchor="start">400</text>
<line x1="592.04" y1="355.22" x2="768.60" y2="355.22" stroke="#e4e8f1" stroke-width="0.6"/>
<text x="582.50" y="383.76" font-size="5" fill="#6e7079" text-anchor="start">200</text>
<line x1="592.04" y1="381.96" x2="768.60" y2="381.96" stroke="#e4e8f1" stroke-width="0.6"/>
<text x="582.50" y="410.50" font-size="5" fill="#6e7079" text-anchor="start">0</text>
<line x1="585.08" y1="408.70" x2="768.60" y2="408.70" stroke="#b4b6bb" stroke-width="0.8"/>
<rect x="624.90" y="265.05" width="10.30" height="5.50" fill="#5470c6" rx="1.3"/>
<text x="637.20" y="269.00" font-size="5" fill="#444" text-anchor="start" textLength="19.7" lengthAdjust="spacingAndGlyphs">2022-11</text>
<rect x="661.10" y="265.05" width="10.30" height="5.50" fill="#91cc75" rx="1.3"/>
<text x="673.80" y="269.00" font-size="5" fill="#444" text-anchor="start" textLength="19.4" lengthAdjust="spacingAndGlyphs">2022-12</text>
<rect x="697.70" y="265.05" width="10.30" height="5.50" fill="#fac858" rx="1.3"/>
<text x="710.00" y="269.00" font-size="5" fill="#444" text-anchor="start" textLength="19.2" lengthAdjust="spacingAndGlyphs">2023-01</text>
<rect x="656.40" y="293.20" width="41.80" height="115.50" fill="#91cc75" rx="0"/>
<rect x="706.40" y="297.90" width="41.20" height="110.80" fill="#fac858" rx="0"/>
</svg><!--/CHARTS-->
<svg class="a" style="left:0;top:43px;pointer-events:none" width="800" height="390" viewBox="0 43 800 390"><defs><g id="wm">
<rect x="-4" y="-14.8" width="13" height="38" rx="3.5"/>
<rect x="15" y="-15.8" width="13" height="33" rx="3.5"/>
<text x="30" y="7" font-size="27" font-weight="bold" font-family="Liberation Sans" textLength="66" lengthAdjust="spacingAndGlyphs" stroke="#fff" stroke-width="1.3">华东</text>
<text x="37" y="18" font-size="9.5" font-weight="bold" font-family="Liberation Sans" textLength="124" lengthAdjust="spacingAndGlyphs">HD INDUSTRY CONTROL</text>
</g><clipPath id="wmclip"><rect x="0" y="68" width="797" height="365"/></clipPath></defs>
<g fill="#fff" opacity="0.17" clip-path="url(#wmclip)">
<use href="#wm" transform="translate(12,211) rotate(-28)"/>
<use href="#wm" transform="translate(87.5,341) rotate(-28)"/>
<use href="#wm" transform="translate(387.5,351) rotate(-28)"/>
<use href="#wm" transform="translate(631.3,323.4) rotate(-28)"/>
</g></svg>
<div class="a" style="left:790px;top:353.3px;width:12px;height:13.3px;background:#3f86ee;border-radius:6.7px 0 0 6.7px"></div>
<svg class="a" style="left:790px;top:353px" width="10" height="14"><path d="M6.6,4.9 L4.8,7 L6.6,9.1" stroke="#fff" stroke-width="1.1" fill="none" stroke-linecap="round"/></svg>
<!-- taskbar -->
<div class="a" id="taskbar"></div>
<svg class="a" style="left:0;top:433px" width="800" height="17" viewBox="0 433 800 17" font-family="Liberation Sans">
<!-- windows logo -->
<path d="M6.3,438.3 L9.6,437.8 V441 H6.3Z M10.2,437.7 L13.8,437.2 V441 H10.2Z M6.3,441.6 H9.6 V444.8 L6.3,444.3Z M10.2,441.6 H13.8 V445.3 L10.2,444.9Z" fill="#fff"/>
<!-- explorer -->
<path d="M26.6,438.2 H30.5 L31.5,439.2 H36 V445.6 H26.6Z" fill="#f0c040"/>
<rect x="26.6" y="440" width="9.4" height="5.6" fill="#ffd865"/>
<path d="M29.5,443.4 H33.2 V445.8 H29.5Z" fill="#2b8fd6"/>
<path d="M28.6,443.2 L31.3,441.1 L34,443.2" stroke="#2b8fd6" stroke-width="0.8" fill="none"/>
<!-- chrome -->
<rect x="42" y="433.4" width="19.2" height="16.6" fill="#3b3d40"/>
<circle cx="51.6" cy="441.7" r="4.7" fill="#db4437"/>
<path d="M51.6,441.7 L47.5,439.35 A4.7,4.7 0 0 0 49.25,445.77Z" fill="#0f9d58"/>
<path d="M51.6,441.7 L49.25,445.77 A4.7,4.7 0 0 0 56.3,441.7Z" fill="#ffcd40"/>
<circle cx="51.6" cy="441.7" r="2.1" fill="#fff"/><circle cx="51.6" cy="441.7" r="1.6" fill="#4285f4"/>
<!-- purple -->
<circle cx="71.9" cy="441.7" r="4.4" fill="#8a3fb8"/><circle cx="71.9" cy="441.2" r="3.2" fill="#a65fd0"/>
<path d="M70.2,440.6 L71.9,443 L73.6,440.6" stroke="#6a2a95" stroke-width="0.8" fill="none"/>
<!-- ring -->
<circle cx="92.2" cy="441.9" r="3.7" fill="none" stroke="#e84e2a" stroke-width="1.4"/>
<path d="M88.6,441 A3.7,3.7 0 0 1 92.2,438.2" stroke="#f7b32b" stroke-width="1.4" fill="none"/>
<path d="M95.8,441 A3.7,3.7 0 0 1 92.2,445.6" stroke="#3b7be0" stroke-width="1.4" fill="none"/>
<path d="M89,443.5 A3.7,3.7 0 0 0 92.2,445.6" stroke="#5fbf4a" stroke-width="1.4" fill="none"/>
<!-- excel -->
<rect x="111.5" y="437.7" width="6.4" height="8.5" fill="#cfe8d6"/>
<path d="M112.5,439.5 H117 M112.5,441.5 H117 M112.5,443.5 H117 M114.8,438.2 V445.8" stroke="#1e7145" stroke-width="0.5"/>
<rect x="107.6" y="438.2" width="6.3" height="7.6" fill="#1e7145"/>
<path d="M109.2,439.9 L112.3,444.1 M112.3,439.9 L109.2,444.1" stroke="#fff" stroke-width="0.9"/>
<!-- terminal -->
<rect x="127.5" y="436.9" width="10.3" height="8.9" fill="#0c0c0c" stroke="#8a8a8a" stroke-width="0.5"/>
<rect x="127.7" y="437.1" width="9.9" height="1.6" fill="#6f6f6f"/>
<path d="M128.8,440.6 L130.2,441.6 L128.8,442.6 M130.6,442.9 H132.4" stroke="#aaa" stroke-width="0.5" fill="none"/>
<!-- green chart -->
<rect x="148.8" y="437.4" width="9" height="9" fill="#e9f3c4"/>
<rect x="148.8" y="443.2" width="9" height="3.2" fill="#5cb85c"/>
<path d="M150,440.8 L152.2,443.8 L158.5,436.8" stroke="#e0a800" stroke-width="1" fill="none"/>
<rect x="150" y="440" width="1" height="3.4" fill="#2e7d32"/>
<!-- window -->
<rect x="168.8" y="437.8" width="9.6" height="8" fill="#f2f2f2"/>
<rect x="170" y="439.4" width="3.2" height="5.4" fill="#3a86c8"/><rect x="173.6" y="439.4" width="3.4" height="5.4" fill="#7ccf7c"/>
<!-- T -->
<rect x="189.4" y="437" width="10.3" height="9.3" rx="1.8" fill="#fff"/>
<path d="M191.3,439.6 H197.9 L196.7,441.4 H195.3 L194.2,444.8 H192.3 L193.4,441.4 H191.3Z" fill="#1a7be6"/>
<!-- underlines -->
<g fill="#76b9ed">
<rect x="22.7" y="449.2" width="17.2" height="0.8"/><rect x="42" y="449.2" width="19.2" height="0.8"/>
<rect x="63.3" y="449.2" width="17.2" height="0.8"/><rect x="84" y="449.2" width="17.8" height="0.8"/>
<rect x="104.1" y="449.2" width="17.2" height="0.8"/><rect x="124.8" y="449.2" width="17.2" height="0.8"/>
<rect x="145.4" y="449.2" width="17.2" height="0.8"/><rect x="165.3" y="449.2" width="17.2" height="0.8"/>
<rect x="186" y="449.2" width="17.2" height="0.8"/>
</g>
<!-- tray -->
<path d="M701.2,442.8 L703.4,440 L705.6,442.8" stroke="#fff" stroke-width="0.75" fill="none"/>
<rect x="709.6" y="437.9" width="6.4" height="5" rx="0.6" fill="none" stroke="#ddd" stroke-width="0.7"/>
<rect x="711.2" y="439.3" width="3" height="2.2" fill="#bbb"/>
<circle cx="715.4" cy="443.4" r="1.5" fill="#e81123"/>
<path d="M720.2,438.4 H726.6 V443 H722.4 L720.8,444.6 V443 H720.2Z" fill="none" stroke="#ddd" stroke-width="0.7"/>
<path d="M731,439.9 H732.3 L734,438.2 V444.6 L732.3,442.9 H731Z" fill="#ddd"/>
<circle cx="735.4" cy="443.3" r="1.5" fill="#e81123"/>
<path d="M740,438.5 H746 M740.8,440.2 H745.2 M740.5,444.8 L743,442 L745.5,444.8 M743,440.2 V442" stroke="#ddd" stroke-width="0.7" fill="none"/>
<text x="762.9" y="440.3" font-size="5.2" fill="#fff" text-anchor="middle" textLength="12.4" lengthAdjust="spacingAndGlyphs">14:06</text>
<text x="762.2" y="447.9" font-size="5.2" fill="#fff" text-anchor="middle" textLength="22" lengthAdjust="spacingAndGlyphs">2023/1/3</text>
<path d="M782.4,437.8 H790.2 V443.2 H787.6 L786.3,444.6 L785,443.2 H782.4Z" fill="none" stroke="#eee" stroke-width="0.75"/>
<rect x="797.2" y="433.4" width="0.5" height="16.6" fill="#555"/>
</svg>


</body></html>
